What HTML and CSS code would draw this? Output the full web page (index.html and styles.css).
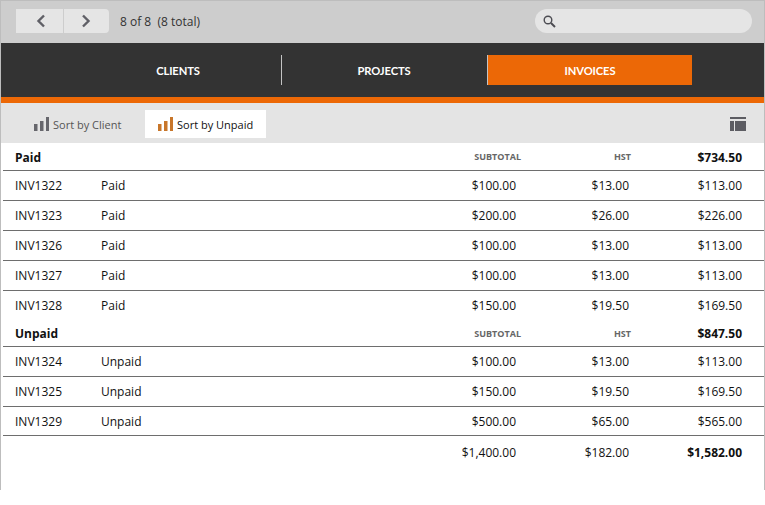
FILE: index.html
```html
<!DOCTYPE html>
<html lang="en">
<head>
<meta charset="utf-8">
<title>Invoices</title>
<link rel="stylesheet" href="styles.css">
</head>
<body>
<div class="frame">
  <header class="toolbar">
    <div class="pager">
      <button class="pager-btn pager-prev" aria-label="Previous"><svg width="10" height="14" viewBox="0 0 10 14"><path d="M8 1.5 2.5 7 8 12.5" fill="none" stroke="#5f5f66" stroke-width="2.4"/></svg></button>
      <button class="pager-btn pager-next" aria-label="Next"><svg width="10" height="14" viewBox="0 0 10 14"><path d="M2 1.5 7.5 7 2 12.5" fill="none" stroke="#5f5f66" stroke-width="2.4"/></svg></button>
    </div>
    <span class="count">8 of 8 &nbsp;(8 total)</span>
    <div class="search"><svg width="13" height="13" viewBox="0 0 13 13"><circle cx="5" cy="5" r="3.8" fill="none" stroke="#4c4c52" stroke-width="1.4"/><path d="M8 8l4 4" stroke="#4c4c52" stroke-width="2"/></svg></div>
  </header>
  <nav class="nav">
    <a class="tab">CLIENTS</a>
    <a class="tab tab-sep">PROJECTS</a>
    <a class="tab tab-active">INVOICES</a>
  </nav>
  <div class="sortbar">
    <div class="sort">
      <svg class="bars" width="15" height="14" viewBox="0 0 15 14"><g fill="#66666c"><rect x="0" y="7" width="3.5" height="7"/><rect x="6" y="4" width="3.5" height="10"/><rect x="12" y="0" width="3" height="14"/></g></svg>
      <span>Sort by Client</span>
    </div>
    <div class="sort sort-active">
      <svg class="bars" width="15" height="14" viewBox="0 0 15 14"><g fill="#c8762a"><rect x="0" y="7" width="3.5" height="7"/><rect x="6" y="4" width="3.5" height="10"/><rect x="12" y="0" width="3" height="14"/></g></svg>
      <span>Sort by Unpaid</span>
    </div>
    <svg class="table-icon" width="16" height="14" viewBox="0 0 16 14"><g fill="#5c5c62"><rect width="16" height="2"/><rect y="4" width="4" height="10"/><rect x="5" y="4" width="11" height="10"/></g></svg>
  </div>
  <main class="list">
    <div class="row head"><b class="c1">Paid</b><span class="c2"></span><span class="label c3">SUBTOTAL</span><span class="label c4">HST</span><b class="c5">$734.50</b></div>
    <div class="row"><span class="c1">INV1322</span><span class="c2">Paid</span><span class="c3">$100.00</span><span class="c4">$13.00</span><span class="c5">$113.00</span></div>
    <div class="row"><span class="c1">INV1323</span><span class="c2">Paid</span><span class="c3">$200.00</span><span class="c4">$26.00</span><span class="c5">$226.00</span></div>
    <div class="row"><span class="c1">INV1326</span><span class="c2">Paid</span><span class="c3">$100.00</span><span class="c4">$13.00</span><span class="c5">$113.00</span></div>
    <div class="row"><span class="c1">INV1327</span><span class="c2">Paid</span><span class="c3">$100.00</span><span class="c4">$13.00</span><span class="c5">$113.00</span></div>
    <div class="row short plain"><span class="c1">INV1328</span><span class="c2">Paid</span><span class="c3">$150.00</span><span class="c4">$19.50</span><span class="c5">$169.50</span></div>
    <div class="row head head-next"><b class="c1">Unpaid</b><span class="c2"></span><span class="label c3">SUBTOTAL</span><span class="label c4">HST</span><b class="c5">$847.50</b></div>
    <div class="row"><span class="c1">INV1324</span><span class="c2">Unpaid</span><span class="c3">$100.00</span><span class="c4">$13.00</span><span class="c5">$113.00</span></div>
    <div class="row"><span class="c1">INV1325</span><span class="c2">Unpaid</span><span class="c3">$150.00</span><span class="c4">$19.50</span><span class="c5">$169.50</span></div>
    <div class="row short"><span class="c1">INV1329</span><span class="c2">Unpaid</span><span class="c3">$500.00</span><span class="c4">$65.00</span><span class="c5">$565.00</span></div>
    <div class="row total"><span class="c1"></span><span class="c2"></span><span class="c3 total-sub">$1,400.00</span><span class="c4">$182.00</span><b class="c5">$1,582.00</b></div>
  </main>
</div>
</body>
</html>
```
FILE: styles.css
```css
* { box-sizing: border-box; }
html, body { margin: 0; padding: 0; background: #fff; }
body { font-family: "Open Sans", sans-serif; font-size: 12px; color: #111; }
.frame {
  width: 765px;
  height: 490px;
  border: 1px solid #bdbdbd;
  border-bottom: 0;
  overflow: hidden;
}
.toolbar {
  height: 42px;
  background: #cdcdcd;
  display: flex;
  align-items: center;
  padding: 0 12px 2px 15px;
}
.pager { display: flex; gap: 1px; width: 93px; height: 24px; }
.pager-btn {
  border: 0;
  padding: 0;
  background: #e5e5e5;
  display: flex;
  align-items: center;
  justify-content: center;
}
.pager-prev { width: 47px; padding-left: 2px; }
.pager-next { width: 45px; padding-right: 2px; border-radius: 0 4px 4px 0; }
.count { margin-left: 11px; color: #333; flex: 1; }
.search {
  width: 217px;
  height: 24px;
  border-radius: 12px;
  background: #e5e5e5;
  display: flex;
  align-items: center;
  padding-left: 8px;
}
.nav {
  height: 60px;
  background: #333;
  border-bottom: 6px solid #ec6806;
  display: flex;
  padding: 12px 0 12px 75px;
}
.tab {
  width: 205px;
  height: 30px;
  display: flex;
  align-items: center;
  justify-content: center;
  font-family: Lato, sans-serif;
  font-weight: 700;
  font-size: 11.2px;
  letter-spacing: -0.1px;
  color: #fff;
  padding-right: 1px;
}
.tab-sep { border-left: 1px solid #c4c4c4; border-right: 1px solid #c4c4c4; width: 207px; }
.tab-active { background: #ec6806; width: 204px; padding-right: 0; }
.sortbar {
  height: 40px;
  background: #e4e4e4;
  display: flex;
  align-items: flex-start;
  padding: 7px 18px 0 18px;
}
.sort {
  height: 28px;
  display: flex;
  align-items: center;
  gap: 4px;
  font-size: 11px;
  color: #555;
  padding: 0 0 0 15px;
  width: 126px;
}
.sort-active { background: #fff; color: #111; width: 121px; padding: 0 0 0 13px; }
.table-icon { margin: 7px 0 0 auto; }
.row {
  height: 30px;
  margin-left: 2px;
  border-bottom: 1px solid #6e6e6e;
  display: grid;
  grid-template-columns: 86px 1fr 110px 108px 113px;
  align-items: center;
  padding: 0 22px 0 12px;
}
.row span, .row b { display: block; white-space: nowrap; }
.row.short { height: 29px; }
.row.plain { border-bottom: 0; }
.head { height: 28px; padding-top: 1px; }
.head-next { height: 27px; }
.c3 { text-align: right; padding-right: 5px; }
.c4 { text-align: right; }
.c5 { text-align: right; }
.row .label { font-size: 9px; font-weight: 700; color: #666; margin-top: -1px; }
.row .label.c3 { padding-right: 0; }
.row .label.c4 { margin-right: -2px; }
.total { border-bottom: 0; padding-top: 2px; }
```
